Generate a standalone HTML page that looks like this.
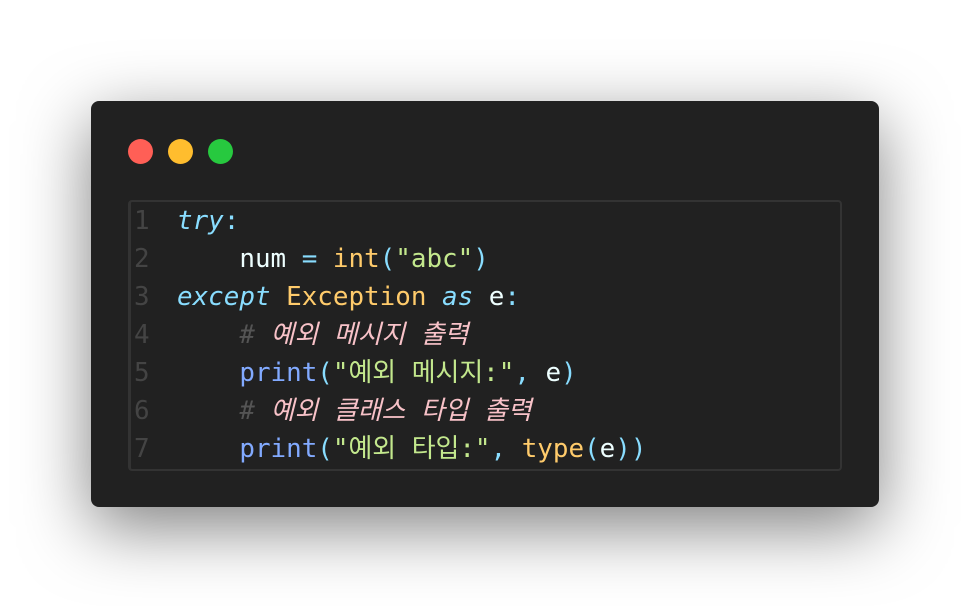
<!DOCTYPE html>
<html><head><meta charset="utf-8"><style>
html,body{margin:0;padding:0;background:#fff;width:970px;height:606px;overflow:hidden}
.win{position:absolute;left:91px;top:101px;width:788px;height:406px;background:#212121;border-radius:8px;box-shadow:0 20px 68px rgba(0,0,0,0.5)}
.dot{position:absolute;top:38px;width:25px;height:25px;border-radius:50%}
.code{position:absolute;left:37px;top:99px;width:714px;height:271px;border:2px solid #333;border-left:3px solid #333;border-radius:4px;box-sizing:border-box}
.ln{position:absolute;left:3px;color:#444;}
.l{position:absolute;white-space:pre}
.row{position:absolute;height:38px;line-height:38px;font-family:"DejaVu Sans Mono","Liberation Mono","Noto Sans CJK KR",monospace;font-size:25.9px;width:700px;left:0}
.k{color:#89ddff;font-style:italic}.w{color:#eeffff}.o{color:#89ddff}.y{color:#ffcb6b}.s{color:#c3e88d}.f{color:#82aaff}.c{color:#545454;font-style:italic}.cp{color:#f8c2c8;font-style:italic}
</style></head><body>
<div class="win">
<div class="dot" style="left:37px;background:#ff5f56"></div>
<div class="dot" style="left:77px;background:#ffbd2e"></div>
<div class="dot" style="left:117px;background:#27c93f"></div>
<div class="code">
<div class="row" style="top:0px"><span class="ln">1</span><span class="l" style="left:46px"><span class="k">try</span><span class="o">:</span></span></div>
<div class="row" style="top:38px"><span class="ln">2</span><span class="l" style="left:46px">    <span class="w">num</span> <span class="o">=</span> <span class="y">int</span><span class="o">(</span><span class="s">"abc"</span><span class="o">)</span></span></div>
<div class="row" style="top:76px"><span class="ln">3</span><span class="l" style="left:46px"><span class="k">except</span> <span class="y">Exception</span> <span class="k">as</span> <span class="w">e</span><span class="o">:</span></span></div>
<div class="row" style="top:114px"><span class="ln">4</span><span class="l" style="left:46px">    <span class="c">#</span> <span class="cp">예외 메시지 출력</span></span></div>
<div class="row" style="top:152px"><span class="ln">5</span><span class="l" style="left:46px">    <span class="f">print</span><span class="o">(</span><span class="s">"예외 메시지:"</span><span class="o">,</span> <span class="w">e</span><span class="o">)</span></span></div>
<div class="row" style="top:190px"><span class="ln">6</span><span class="l" style="left:46px">    <span class="c">#</span> <span class="cp">예외 클래스 타입 출력</span></span></div>
<div class="row" style="top:228px"><span class="ln">7</span><span class="l" style="left:46px">    <span class="f">print</span><span class="o">(</span><span class="s">"예외 타입:"</span><span class="o">,</span> <span class="y">type</span><span class="o">(</span><span class="w">e</span><span class="o">))</span></span></div>
</div>
</div>
</body></html>
